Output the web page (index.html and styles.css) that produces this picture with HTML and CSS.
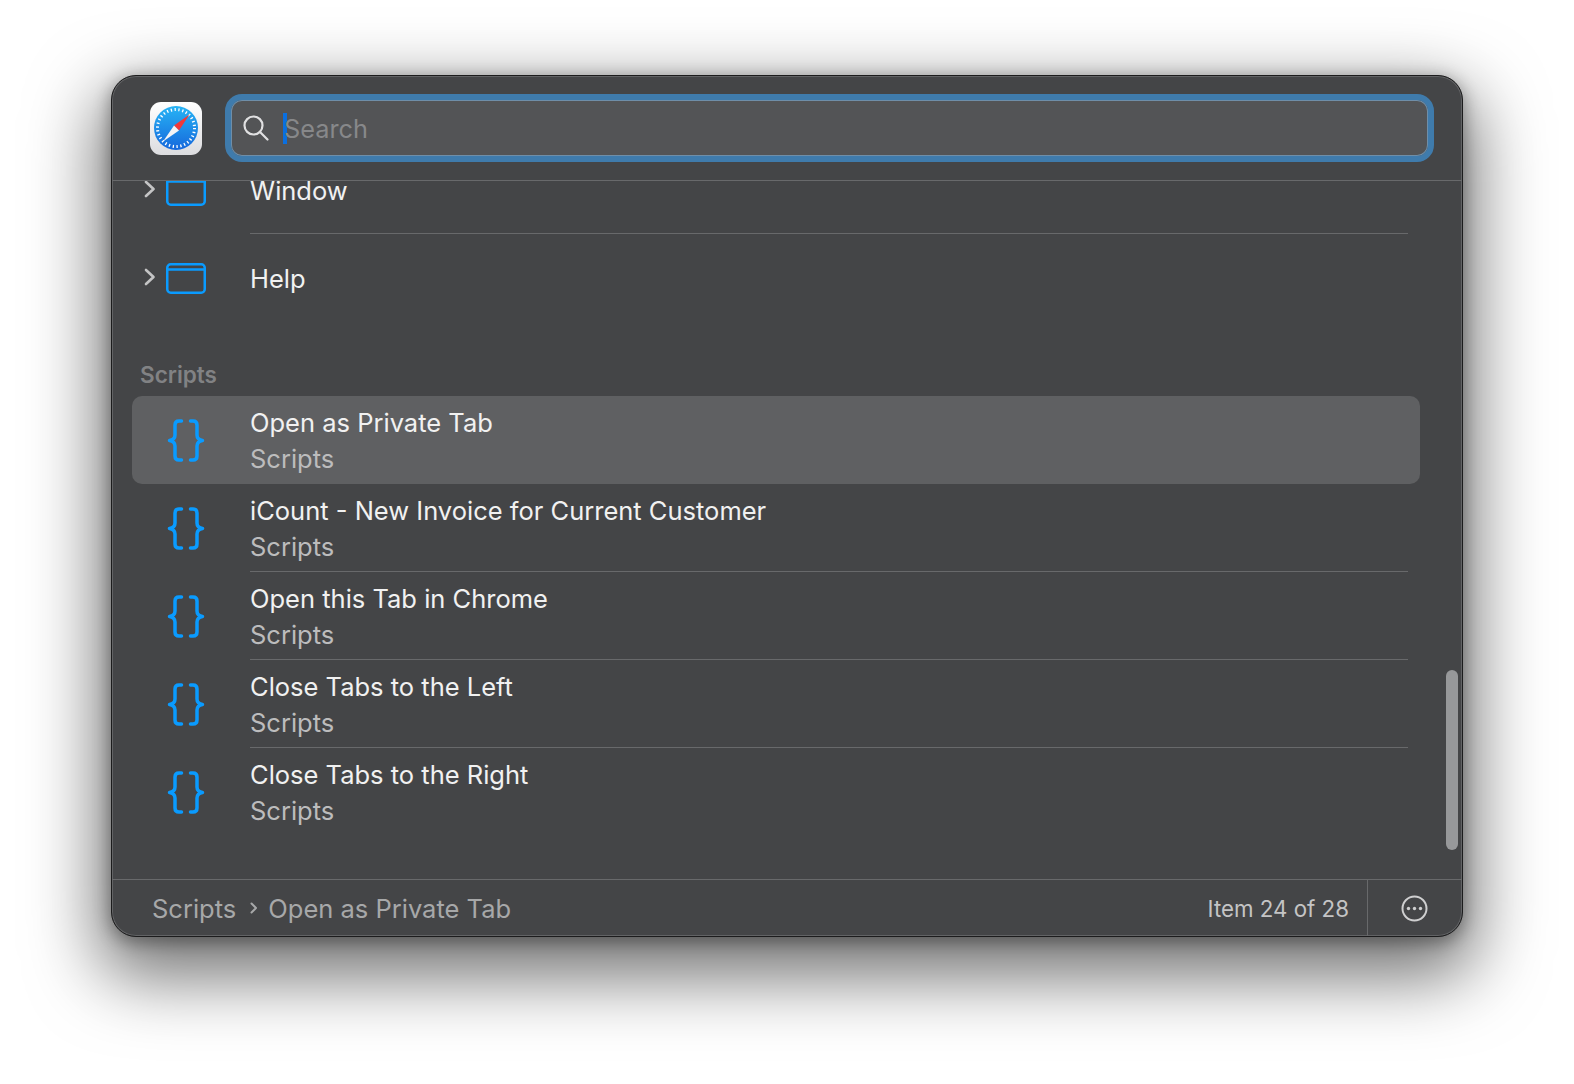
FILE: index.html
```html
<!DOCTYPE html>
<html lang="en">
<head>
<meta charset="utf-8">
<title>Search menu items</title>
<link rel="stylesheet" href="styles.css">
</head>
<body>
<svg class="defs" width="0" height="0" aria-hidden="true">
  <defs>
    <symbol id="braces" viewBox="0 0 37 43">
      <path d="M14 2h-2.500c-2.500 0-4 1.500-4 4v10c0 2.800-1.500 4.800-5.500 5.500 4 .7 5.500 2.700 5.500 5.500v10c0 2.500 1.500 4 4 4H14M23 2h2.500c2.500 0 4 1.500 4 4v10c0 2.800 1.500 4.800 5.500 5.500-4 .7-5.500 2.700-5.500 5.500v10c0 2.500-1.500 4-4 4H23"/>
    </symbol>
    <symbol id="win" viewBox="0 0 40 31">
      <rect x="1.250" y="1.250" width="37.500" height="28.500" rx="3.500"/>
      <path d="M1 6.500h38"/>
    </symbol>
    <symbol id="chev" viewBox="0 0 12 18">
      <path d="M2 2l7.500 7L2 16"/>
    </symbol>
  </defs>
</svg>
<main class="window">
  <header class="head">
    <svg class="app" viewBox="0 0 52 53" aria-label="Safari">
      <defs>
        <linearGradient id="tile" x1="0" y1="0" x2="0" y2="1"><stop offset="0" stop-color="#fff"/><stop offset="1" stop-color="#dcdcdf"/></linearGradient>
        <linearGradient id="disc" x1="0" y1="0" x2="0" y2="1"><stop offset="0" stop-color="#27b4f5"/><stop offset="1" stop-color="#1668dc"/></linearGradient>
      </defs>
      <rect width="52" height="53" rx="11" fill="url(#tile)"/>
      <circle cx="26" cy="26" r="22" fill="url(#disc)"/>
      <circle cx="26" cy="26" r="18.500" fill="none" stroke="#fff" stroke-width="3" stroke-dasharray="1.300 2.570"/>
      <path d="M39.500 12.500L24 23.500l5 5z" fill="#f0383a"/>
      <path d="M13 39.500L24 23.500l5 5z" fill="#f4f4f6"/>
    </svg>
    <div class="search">
      <svg class="glass" viewBox="0 0 26 26"><circle cx="10.500" cy="10.500" r="9"/><path d="M17 17l7.500 7.500"/></svg>
      <span class="caret"></span>
      <span class="placeholder">Search</span>
    </div>
  </header>
  <section class="list">
    <div class="scroller">
      <div class="row">
        <svg class="chev"><use href="#chev"/></svg>
        <svg class="icon win"><use href="#win"/></svg>
        <div class="body lined"><div class="title">Window</div></div>
      </div>
      <div class="row">
        <svg class="chev"><use href="#chev"/></svg>
        <svg class="icon win"><use href="#win"/></svg>
        <div class="body"><div class="title">Help</div></div>
      </div>
      <h2 class="label">Scripts</h2>
      <div class="row selected">
        <span class="chev"></span>
        <svg class="icon brace"><use href="#braces"/></svg>
        <div class="body"><div class="title">Open as Private Tab</div><div class="sub">Scripts</div></div>
      </div>
      <div class="row">
        <span class="chev"></span>
        <svg class="icon brace"><use href="#braces"/></svg>
        <div class="body lined"><div class="title">iCount - New Invoice for Current Customer</div><div class="sub">Scripts</div></div>
      </div>
      <div class="row">
        <span class="chev"></span>
        <svg class="icon brace"><use href="#braces"/></svg>
        <div class="body lined"><div class="title">Open this Tab in Chrome</div><div class="sub">Scripts</div></div>
      </div>
      <div class="row">
        <span class="chev"></span>
        <svg class="icon brace"><use href="#braces"/></svg>
        <div class="body lined"><div class="title">Close Tabs to the Left</div><div class="sub">Scripts</div></div>
      </div>
      <div class="row">
        <span class="chev"></span>
        <svg class="icon brace"><use href="#braces"/></svg>
        <div class="body"><div class="title">Close Tabs to the Right</div><div class="sub">Scripts</div></div>
      </div>
    </div>
    <div class="thumb"></div>
  </section>
  <footer class="foot">
    <div class="crumbs">
      <span>Scripts</span>
      <svg class="crumb-sep" viewBox="0 0 8 12"><path d="M1.500 1.500L6 6l-4.500 4.500"/></svg>
      <span>Open as Private Tab</span>
    </div>
    <div class="count">Item 24 of 28</div>
    <div class="more">
      <svg class="more-icon" viewBox="0 0 27 27"><circle cx="13.500" cy="13.500" r="12"/><circle class="dot" cx="7.500" cy="13.500" r="1.700"/><circle class="dot" cx="13.500" cy="13.500" r="1.700"/><circle class="dot" cx="19.500" cy="13.500" r="1.700"/></svg>
    </div>
  </footer>
</main>
</body>
</html>
```
FILE: styles.css
```css
* { box-sizing: border-box; }
html, body { height: 100%; }
body {
  margin: 0;
  padding: 75px 111px 0 111px;
  background: #fff;
  font-family: Inter, "Liberation Sans", sans-serif;
  font-weight: 430;
  overflow: hidden;
}
.defs { position: absolute; }
.window {
  width: 1352px;
  height: 862px;
  display: flex;
  flex-direction: column;
  background: #444547;
  border: 1.500px solid #1c1c1d;
  border-radius: 25px;
  box-shadow: inset 0 0 0 1px #626365, 0 28px 70px 12px rgba(0,0,0,.55), 0 4px 16px 2px rgba(0,0,0,.3);
  overflow: hidden;
}
.head {
  height: 105px;
  flex: none;
  display: flex;
  align-items: flex-start;
  padding: 26px 28px 0 38px;
  gap: 23px;
  border-bottom: 1px solid #68696b;
}
.app { width: 52px; height: 53px; flex: none; }
.search {
  flex: 1;
  height: 68px;
  margin-top: -8px;
  display: flex;
  align-items: center;
  padding-left: 12px;
  background: #535456;
  border: 6px solid #3f7bac;
  border-radius: 17px;
  box-shadow: inset 0 0 0 1px #6f8ea8;
}
.glass { width: 26px; height: 26px; flex: none; fill: none; stroke: #e0e0e1; stroke-width: 2.200; stroke-linecap: round; }
.caret { width: 4px; height: 31px; flex: none; margin-left: 14px; background: #0a6fe0; }
.placeholder { margin-left: -3px; padding-top: 1px; font-size: 25.300px; color: #87888a; }
.list { position: relative; flex: 1; min-height: 0; overflow: hidden; }
.scroller { margin-top: -35px; padding: 0 42px 0 20px; }
.row {
  height: 88px;
  display: flex;
  align-items: center;
  padding: 0 12px;
  border-radius: 10px;
}
.selected { background: #5f6062; }
.chev { width: 12px; height: 18px; flex: none; margin-right: 10px; margin-top: -2px; fill: none; stroke: #c4c4c5; stroke-width: 2.600; stroke-linecap: round; stroke-linejoin: round; }
.icon { flex: none; fill: none; stroke: #0a9bff; }
.win { width: 40px; height: 31px; stroke-width: 2.500; }
.brace { width: 40px; height: 43px; stroke-width: 3.500; stroke-linecap: round; stroke-linejoin: round; }
.body {
  flex: 1;
  align-self: stretch;
  margin-left: 44px;
  padding-top: 2px;
  display: flex;
  flex-direction: column;
  justify-content: center;
}
.lined { border-bottom: 1px solid #68696b; }
.title { font-size: 25.500px; line-height: 36px; color: #f1f1f1; }
.sub { font-size: 25.500px; line-height: 36px; color: #bcbcbd; }
.label {
  height: 74px;
  margin: 0;
  padding: 0 0 6px 8px;
  display: flex;
  align-items: flex-end;
  font-size: 22.500px;
  font-weight: 600;
  line-height: 30px;
  color: #818284;
}
.thumb {
  position: absolute;
  top: 489px;
  right: 4px;
  width: 12px;
  height: 180px;
  border-radius: 6px;
  background: #97989a;
}
.foot {
  height: 57px;
  flex: none;
  display: flex;
  align-items: center;
  border-top: 1px solid #68696b;
  padding-left: 40px;
}
.crumbs { flex: 1; display: flex; align-items: center; font-size: 25.500px; color: #a7a8a9; }
.crumb-sep { width: 8px; height: 12px; margin: 0 10px 0 14px; fill: none; stroke: #a7a8a9; stroke-width: 2; stroke-linecap: round; stroke-linejoin: round; }
.count { font-size: 22.300px; color: #c4c4c5; margin-right: 18px; }
.more { width: 95px; padding-right: 1px; align-self: stretch; display: flex; align-items: center; justify-content: center; border-left: 1px solid #68696b; }
.more-icon { width: 27px; height: 27px; fill: none; stroke: #cfcfd0; stroke-width: 2; }
.more-icon .dot { fill: #cfcfd0; stroke: none; }
```
